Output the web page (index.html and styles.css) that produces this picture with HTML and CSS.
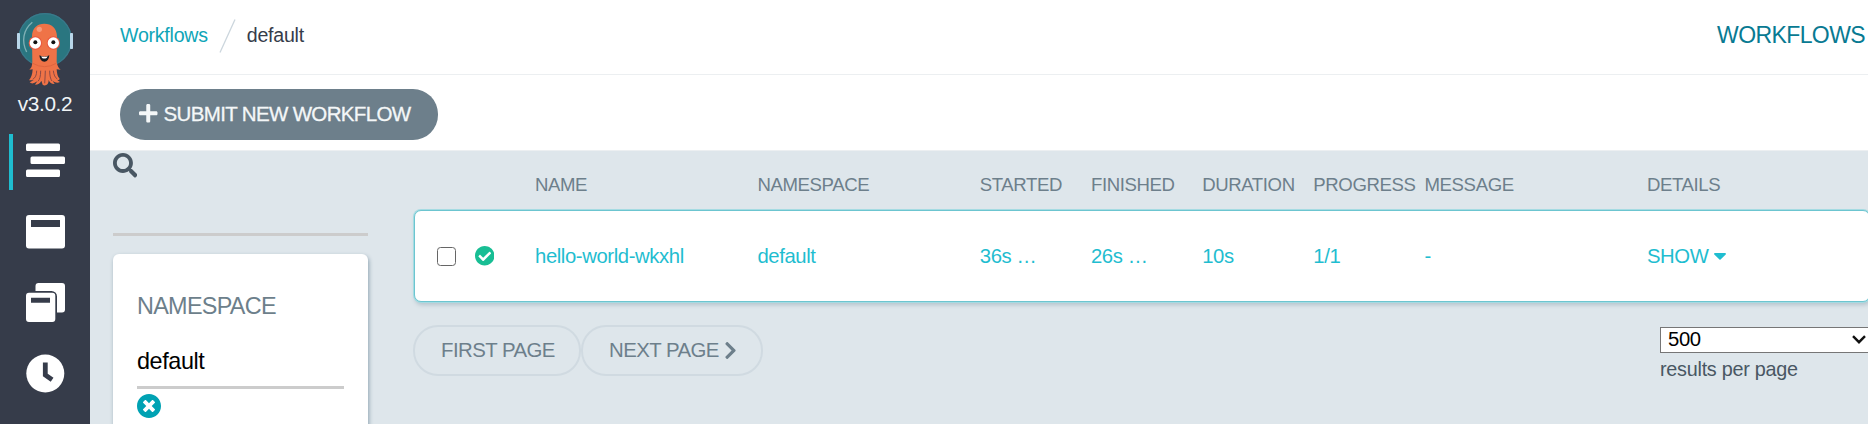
FILE: index.html
```html
<!DOCTYPE html>
<html lang="en">
<head>
<meta charset="utf-8">
<title>Workflows</title>
<link rel="stylesheet" href="styles.css">
</head>
<body>
<div class="app">
  <nav class="sidebar">
    <svg class="logo" viewBox="48 36 174 225">
      <circle cx="135" cy="120" r="81" fill="#2a7680"/>
      <circle cx="135" cy="120" r="79" fill="none" stroke="#39798a" stroke-width="4"/>
      <path d="M97 67C69 90 64 125 80 156" fill="none" stroke="#7fb0b5" stroke-width="4"/>
      <rect x="51" y="99" width="9" height="48" rx="2" fill="#b9d7ea"/>
      <rect x="210" y="99" width="9" height="48" rx="2" fill="#b9d7ea"/>
      <path d="M96 110C96 84 112 71 133 71S171 84 171 110L170 186Q173 203 182 209L170 208Q171 229 178 235Q181 240 172 241L180 246Q170 252 158 243L164 252Q151 253 146 240Q146 252 139 255Q133 258 128 254L124 242Q119 254 105 254L112 244Q97 255 89 247L101 241L87 241Q97 229 98 208L88 209Q97 202 97 186Z" fill="#ef7347"/>
      <path d="M110 212Q110 232 98 238M122 212Q122 236 114 244M136 212Q135 237 134 250M149 212Q149 234 156 243M160 212Q162 231 172 237" fill="none" stroke="#8d4a44" stroke-width="3"/>
      <path d="M98 190Q134 210 169 190" fill="none" stroke="#df653f" stroke-width="3"/>
      <circle cx="118" cy="88" r="8" fill="#f79b7b"/>
      <circle cx="106" cy="129" r="20" fill="#e9573f"/>
      <circle cx="160" cy="129" r="20" fill="#e9573f"/>
      <circle cx="106" cy="129" r="17" fill="#fff"/>
      <circle cx="160" cy="129" r="17" fill="#fff"/>
      <circle cx="106" cy="127" r="6" fill="#111"/>
      <circle cx="160" cy="127" r="6" fill="#111"/>
      <path d="M118 166Q133 174 148 166Q146 185 133 185T118 166Z" fill="#171d22"/>
      <path d="M124 169Q133 172 143 169L140 174Q133 177 126 174Z" fill="#fff"/>
    </svg>
    <div class="version">v3.0.2</div>
    <a class="nav-item nav-active"><svg viewBox="0 0 39 39"><path d="M1.5 2.5h31a1.5 1.5 0 0 1 1.500 1.500v4.500a1.500 1.500 0 0 1-1.500 1.500h-31A1.500 1.500 0 0 1 0 8.500V4a1.500 1.500 0 0 1 1.500-1.500zM6 15.500h31.500A1.500 1.500 0 0 1 39 17v4.500a1.500 1.500 0 0 1-1.500 1.500H6a1.500 1.500 0 0 1-1.500-1.500V17A1.500 1.500 0 0 1 6 15.500zM1.500 28.500h31A1.500 1.500 0 0 1 34 30v4.500a1.500 1.500 0 0 1-1.500 1.500h-31A1.500 1.500 0 0 1 0 34.500V30a1.500 1.500 0 0 1 1.500-1.500z"/></svg></a>
    <a class="nav-item"><svg viewBox="0 0 39 39"><path fill-rule="evenodd" d="M3 3h33a3 3 0 0 1 3 3v27.500a3 3 0 0 1-3 3H3a3 3 0 0 1-3-3V6a3 3 0 0 1 3-3zM5 8v7h29V8z"/></svg></a>
    <a class="nav-item"><svg viewBox="0 0 39 39"><path fill-rule="evenodd" d="M12.500 0H36a3 3 0 0 1 3 3v23.500a3 3 0 0 1-3 3h-5V13.500a5.500 5.500 0 0 0-5.500-5.500h-16V3a3 3 0 0 1 3-3zM3 9.800h23.300a3 3 0 0 1 3 3V36a3 3 0 0 1-3 3H3a3 3 0 0 1-3-3V12.800a3 3 0 0 1 3-3zM5 14.700v5h19v-5z"/></svg></a>
    <a class="nav-item"><svg viewBox="0 0 39 39"><circle cx="19.300" cy="19.500" r="19"/><path d="M19.300 8.500v12.500l6.800 4.800" fill="none" stroke="#363c4a" stroke-width="4.800"/></svg></a>
  </nav>
  <div class="page">
    <header class="topbar">
      <div class="crumbs">
        <a class="crumb-link">Workflows</a>
        <svg class="slash" viewBox="0 0 17 34"><path d="M1 33.500L16 .5" stroke="#ccd6dd" stroke-width="1.300"/></svg>
        <span>default</span>
      </div>
      <div class="title">WORKFLOWS</div>
    </header>
    <div class="toolbar">
      <button class="submit"><svg viewBox="0 32 448 448"><path d="M416 208H272V64c0-17.670-14.330-32-32-32h-32c-17.670 0-32 14.330-32 32v144H32c-17.670 0-32 14.330-32 32v32c0 17.670 14.330 32 32 32h144v144c0 17.670 14.330 32 32 32h32c17.670 0 32-14.330 32-32V304h144c17.670 0 32-14.330 32-32v-32c0-17.670-14.330-32-32-32z"/></svg>SUBMIT NEW WORKFLOW</button>
    </div>
    <main class="content">
      <aside class="filters">
        <div class="search"><svg viewBox="0 0 512 512"><path d="M505 442.700L405.300 343c-4.500-4.500-10.600-7-17-7H372c27.600-35.300 44-79.700 44-128C416 93.100 322.900 0 208 0S0 93.100 0 208s93.100 208 208 208c48.300 0 92.700-16.400 128-44v16.300c0 6.400 2.500 12.500 7 17l99.700 99.700c9.400 9.400 24.600 9.400 33.900 0l28.300-28.300c9.400-9.400 9.400-24.600.1-34zM208 336c-70.700 0-128-57.200-128-128 0-70.700 57.200-128 128-128 70.700 0 128 57.200 128 128 0 70.700-57.200 128-128 128z"/></svg></div>
        <div class="filter-card">
          <div class="filter-label">NAMESPACE</div>
          <div class="filter-value">default</div>
          <svg class="clear" viewBox="8 8 496 496"><path d="M256 8C119 8 8 119 8 256s111 248 248 248 248-111 248-248S393 8 256 8zm121.600 313.100c4.700 4.700 4.700 12.300 0 17L338 377.600c-4.700 4.700-12.300 4.700-17 0L256 312l-65.100 65.600c-4.700 4.700-12.300 4.700-17 0L134.400 338c-4.700-4.700-4.700-12.300 0-17l65.600-65-65.600-65.100c-4.700-4.700-4.700-12.300 0-17l39.600-39.600c4.700-4.700 12.300-4.700 17 0l65 65.700 65.100-65.600c4.700-4.700 12.300-4.700 17 0l39.600 39.600c4.700 4.700 4.700 12.300 0 17L312 256l65.600 65.100z"/></svg>
        </div>
      </aside>
      <section class="results">
        <div class="cols head"><span></span><span>NAME</span><span>NAMESPACE</span><span>STARTED</span><span>FINISHED</span><span>DURATION</span><span>PROGRESS</span><span>MESSAGE</span><span>DETAILS</span></div>
        <div class="cols row">
          <span class="status"><span class="box"></span><svg viewBox="8 8 496 496"><path d="M504 256c0 136.967-111.033 248-248 248S8 392.967 8 256 119.033 8 256 8s248 111.033 248 248zM227.314 387.314l184-184c6.248-6.248 6.248-16.379 0-22.627l-22.627-22.627c-6.248-6.249-16.379-6.249-22.628 0L216 308.118l-70.059-70.059c-6.248-6.248-16.379-6.248-22.628 0l-22.627 22.627c-6.248 6.248-6.248 16.379 0 22.627l104 104c6.249 6.249 16.379 6.249 22.628.001z"/></svg></span>
          <span>hello-world-wkxhl</span><span>default</span><span>36s …</span><span>26s …</span><span>10s</span><span>1/1</span><span>-</span><span class="show">SHOW<svg viewBox="10 192 300 170"><path d="M31.300 192h257.300c17.800 0 26.700 21.500 14.100 34.100L174.100 354.800c-7.800 7.800-20.500 7.800-28.300 0L17.200 226.100C4.600 213.500 13.500 192 31.300 192z"/></svg></span>
        </div>
        <div class="footer">
          <div class="pager">
            <button class="page-btn first">FIRST PAGE</button>
            <button class="page-btn next">NEXT PAGE<svg viewBox="27 37 266 438"><path d="M285.476 272.971L91.132 467.314c-9.373 9.373-24.569 9.373-33.941 0l-22.667-22.667c-9.357-9.357-9.375-24.522-.04-33.901L188.505 256 34.484 101.255c-9.335-9.379-9.317-24.544.04-33.901l22.667-22.667c9.373-9.373 24.569-9.373 33.941 0L285.475 239.030c9.373 9.372 9.373 24.568.001 33.941z"/></svg></button>
          </div>
          <div class="limit">
            <div class="select"><span>500</span><svg viewBox="0 0 14 9"><path d="M1 1.200l6 6 6-6" fill="none" stroke="#111" stroke-width="2.400"/></svg></div>
            <div class="limit-label">results per page</div>
          </div>
        </div>
      </section>
    </main>
  </div>
</div>
</body>
</html>
```

FILE: styles.css
```css
* { box-sizing: border-box; }
body { margin: 0; overflow: hidden; font: 20.3px "Liberation Sans", Arial, sans-serif; letter-spacing: -.4px; color: #495763; }
svg { display: block; flex: none; }
button { font: inherit; letter-spacing: inherit; margin: 0; }
.app { display: flex; width: 1868px; height: 424px; overflow: hidden; background: #fff; }

.sidebar { width: 90px; flex: none; background: #363c4a; display: flex; flex-direction: column; }
.logo { width: 58px; height: 75px; margin: 12px 0 0 16px; }
.version { height: 24px; line-height: 24px; margin: 5px 0 18px; font-size: 20.8px; text-align: center; color: #f0f4f6; }
.nav-item { height: 56px; margin-bottom: 15px; padding: 0 0 3px 13px; margin-left: 9px; border-left: 4px solid transparent; display: flex; align-items: center; }
.nav-active { border-color: #1fbdd0; }
.nav-item svg { width: 39px; height: 39px; fill: #fff; }

.page { flex: 1; min-width: 0; display: flex; flex-direction: column; }
.topbar { height: 75px; border-bottom: 1px solid #eceff1; padding: 0 3px 3px 30px; display: flex; align-items: center; justify-content: space-between; }
.crumbs { display: flex; align-items: center; font-size: 19.6px; letter-spacing: -.25px; color: #363c4a; }
.crumb-link { color: #0fa5b7; }
.slash { width: 17px; height: 34px; margin: 1px 11px 0; }
.title { font-size: 23px; letter-spacing: -.6px; color: #087a92; }
.toolbar { height: 76px; padding: 14px 30px 0; border-bottom: 1px solid #eceff1; }
.submit { width: 318px; height: 51px; border: 0; border-radius: 25px; padding: 0 0 2px 19px; display: flex; align-items: center; gap: 6px; background: #6d7f8b; color: #f4f7f8; font-size: 20.5px; letter-spacing: -.65px; -webkit-text-stroke: .3px #f4f7f8; white-space: nowrap; }
.submit svg { width: 18.5px; height: 18.5px; fill: currentColor; }

.content { flex: 1; min-height: 0; display: flex; background: #dee6eb; }
.filters { width: 255px; flex: none; margin-left: 23px; }
.search { height: 85px; padding-top: 2px; border-bottom: 3px solid #ccc; }
.search svg { width: 24.5px; height: 24.5px; margin-left: -.5px; fill: #495763; }
.filter-card { height: 250px; margin-top: 18px; padding: 36px 24px 0; background: #fff; border-radius: 6px; box-shadow: 1px 2px 4px #8fa4b1; font-size: 23.4px; }
.filter-label { height: 32px; line-height: 32px; letter-spacing: -.7px; color: #6d7f8b; }
.filter-value { height: 67px; line-height: 30px; padding-top: 24px; border-bottom: 3px solid #ccc; color: #000; }
.clear { width: 24px; height: 24px; margin-top: 5px; fill: #00a2b3; }

.results { width: 1457px; flex: none; margin-left: 45px; display: flex; flex-direction: column; }
.cols { display: grid; grid-template-columns: 111px 222.4px 222.4px repeat(4, 111.2px) 222.4px 111px; align-items: center; white-space: nowrap; }
.head { height: 59px; padding: 9px 0 0 11px; font-size: 18.6px; color: #6d7f8b; align-content: center; }
.row { height: 92px; padding-left: 9px; border: 1px solid #6cc5d0; border-radius: 7px; background: #fff; box-shadow: 0 0 0 1px #a5dbe2, 1px 3px 4px #b4c3cc; color: #1fbdd0; margin-left: 1px; }
.status { display: flex; align-items: center; padding-left: 13px; gap: 18.5px; }
.box { width: 19px; height: 19px; border: 1.5px solid #666; border-radius: 3.5px; background: #fff; }
.status svg { width: 19.5px; height: 19.5px; fill: #18be94; }
.show { display: flex; align-items: center; gap: 6px; }
.show svg { width: 12px; height: 7px; }
.show svg, .page-btn svg { fill: currentColor; }
.footer { display: flex; justify-content: space-between; padding-top: 23px; }
.pager { display: flex; }
.page-btn { height: 51px; border: 2px solid #d0dae1; border-radius: 25px; background: transparent; color: #6d7f8b; padding: 0 0 1px 26px; display: flex; align-items: center; font-size: 20.4px; letter-spacing: -.55px; white-space: nowrap; }
.first { width: 168px; }
.next { width: 182px; gap: 6px; }
.page-btn svg { width: 11px; height: 17px; }
.limit { width: 210px; padding-top: 2px; }
.select { height: 26px; border: 1px solid #767676; background: #fff; display: flex; align-items: center; justify-content: space-between; padding: 0 3px 1px 7px; color: #000; }
.select svg { width: 14px; height: 9px; }
.limit-label { font-size: 19.8px; letter-spacing: -.25px; line-height: 24px; margin-top: 4px; }
```
